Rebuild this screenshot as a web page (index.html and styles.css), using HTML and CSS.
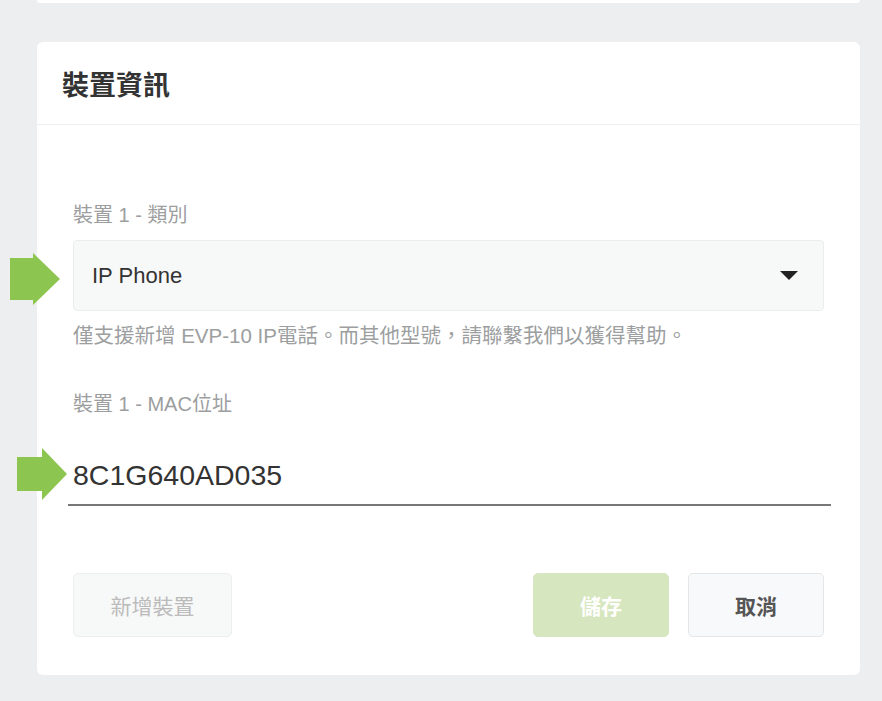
FILE: index.html
```html
<!DOCTYPE html>
<html lang="zh-Hant">
<head>
    <meta charset="UTF-8">
    <meta name="viewport" content="width=device-width, initial-scale=1.0">
    <title>裝置資訊</title>
    <link rel="stylesheet" href="styles.css">
</head>
<body>
    <div class="page">
        <div class="card card-stub"></div>

        <div class="card">
            <div class="card-header">
                <h2>裝置資訊</h2>
            </div>
            <div class="card-body">
                <label class="field-label">裝置 1 - 類別</label>
                <div class="select-box">
                    <svg class="pointer" width="50" height="52" viewBox="0 0 50 52">
                        <polygon points="0,5 23,5 23,0 50,26 23,52 23,47 0,47" fill="#8cc650"/>
                    </svg>
                    <span class="select-value">IP Phone</span>
                    <span class="caret"></span>
                </div>
                <p class="help-text">僅支援新增 EVP-10 IP電話。而其他型號，請聯繫我們以獲得幫助。</p>

                <label class="field-label field-label-spaced">裝置 1 - MAC位址</label>
                <div class="mac-input">
                    <svg class="pointer pointer-mac" width="50" height="52" viewBox="0 0 50 52">
                        <polygon points="0,9 25,9 25,0 50,26 25,52 25,43 0,43" fill="#8cc650"/>
                    </svg>
                    <span class="mac-value">8C1G640AD035</span>
                </div>

                <div class="actions">
                    <button class="btn btn-add">新增裝置</button>
                    <div class="actions-right">
                        <button class="btn btn-save">儲存</button>
                        <button class="btn btn-cancel">取消</button>
                    </div>
                </div>
            </div>
        </div>
    </div>
</body>
</html>
```

FILE: styles.css
```css
body {
    margin: 0;
    background: #eceef0;
    font-family: "Liberation Sans", "Noto Sans CJK TC", sans-serif;
    color: #333;
}
.page {
    padding: 0 22px 0 37px;
}
.card {
    background: #fff;
    border-radius: 6px;
}
.card-stub {
    height: 3px;
    border-radius: 0 0 4px 4px;
    margin-bottom: 39px;
}
.card-header {
    height: 82px;
    display: flex;
    align-items: center;
    padding-left: 25px;
    border-bottom: 1px solid #eeeff0;
}
.card-header h2 {
    margin: 0;
    font-size: 27px;
    font-weight: bold;
    color: #333;
    font-family: "Noto Sans CJK TC", sans-serif;
}
.card-body {
    padding: 78px 36px 38px 36px;
    display: flex;
    flex-direction: column;
}
.field-label {
    font-size: 20px;
    line-height: 24px;
    color: #9c9ea0;
}
.field-label-spaced {
    margin-top: 44px;
}
.select-box {
    position: relative;
    margin-top: 13px;
    height: 69px;
    background: #f7f8f8;
    border: 1px solid #ececec;
    border-radius: 4px;
    display: flex;
    align-items: center;
    padding: 0 25px 0 18px;
}
.select-value {
    flex: 1;
    font-size: 22px;
    color: #333;
}
.caret {
    width: 0;
    height: 0;
    border-left: 9px solid transparent;
    border-right: 9px solid transparent;
    border-top: 9px solid #222;
}
.pointer {
    position: absolute;
    left: -64px;
    top: 12px;
}
.pointer-mac {
    left: -51px;
    top: -9px;
}
.help-text {
    margin: 13px 0 0 0;
    font-size: 20.5px;
    line-height: 24px;
    color: #9c9ea0;
}
.mac-input {
    position: relative;
    margin: 41px -7px 0 -5px;
    padding: 0 0 11px 5px;
    border-bottom: 2px solid #777;
}
.mac-value {
    display: block;
    font-size: 28.5px;
    line-height: 36px;
    color: #333;
}
.actions {
    margin-top: 67px;
    display: flex;
    justify-content: space-between;
}
.actions-right {
    display: flex;
    gap: 19px;
}
.btn {
    height: 64px;
    border-radius: 5px;
    font-size: 21px;
    font-family: "Noto Sans CJK TC", sans-serif;
    border: 1px solid #eceeef;
    background: #f7f8f8;
    cursor: pointer;
}
.btn-add {
    width: 159px;
    color: #bbb;
}
.btn-save {
    width: 136px;
    background: #d6e6be;
    border-color: #d6e6be;
    color: #fff;
    font-weight: bold;
}
.btn-cancel {
    width: 136px;
    background: #f8f9fa;
    border-color: #e4e6e8;
    color: #555;
    font-weight: bold;
}
```
